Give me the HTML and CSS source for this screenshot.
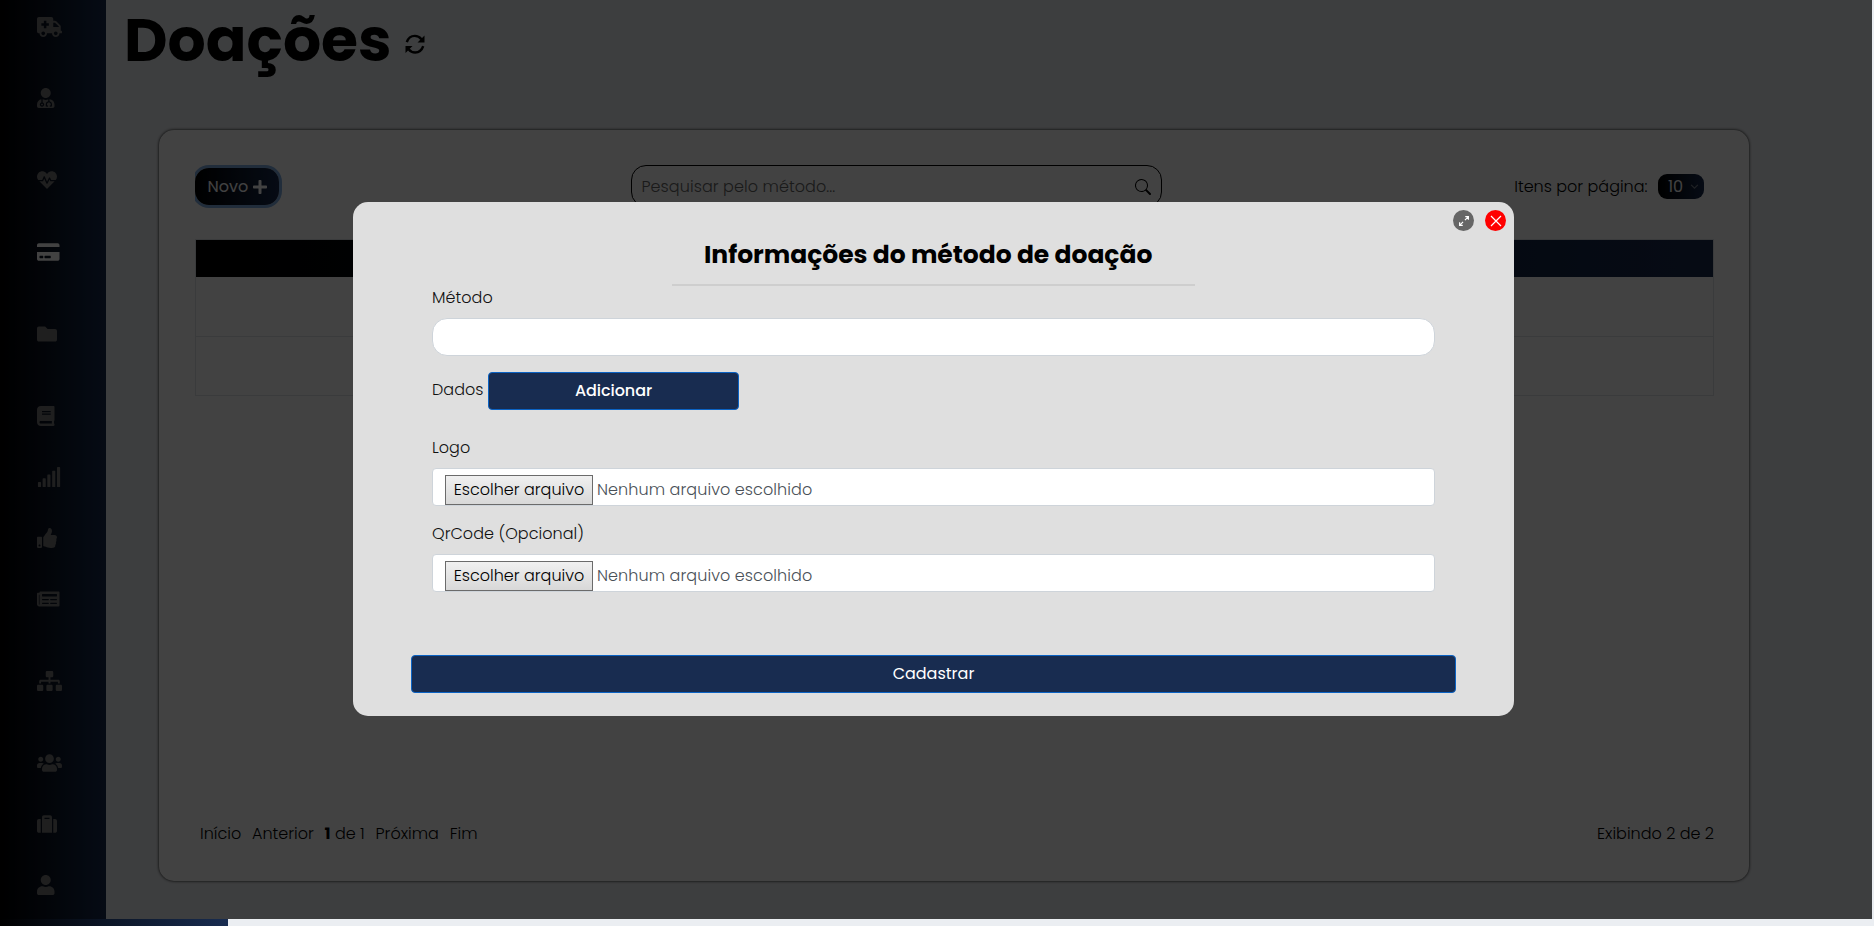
FILE: index.html
```html
<!DOCTYPE html>
<html lang="pt-BR">
<head>
<meta charset="utf-8">
<title>Doações</title>
<link rel="stylesheet" href="styles.css">
</head>
<body>
<div class="app">
  <nav class="sidebar">
    <svg class="ic" viewBox="0 0 640 512"><path fill-rule="evenodd" d="M624 352h-16V243.900c0-12.700-5.100-24.900-14.100-33.900L494 110.100c-9-9-21.200-14.100-33.900-14.100H416V48c0-26.500-21.500-48-48-48H48C21.500 0 0 21.500 0 48v320c0 26.500 21.500 48 48 48h16c0 53 43 96 96 96s96-43 96-96h128c0 53 43 96 96 96s96-43 96-96h48c8.800 0 16-7.200 16-16v-32c0-8.800-7.200-16-16-16zM160 464c-26.500 0-48-21.500-48-48s21.500-48 48-48 48 21.500 48 48-21.500 48-48 48zm144-248c0 4.400-3.600 8-8 8h-56v56c0 4.400-3.600 8-8 8h-48c-4.400 0-8-3.600-8-8v-56h-56c-4.400 0-8-3.600-8-8v-48c0-4.400 3.600-8 8-8h56v-56c0-4.400 3.600-8 8-8h48c4.400 0 8 3.600 8 8v56h56c4.400 0 8 3.600 8 8v48zm176 248c-26.500 0-48-21.500-48-48s21.500-48 48-48 48 21.500 48 48-21.500 48-48 48zm80-208H416V144h44.100l99.900 99.900V256z"/></svg>
    <svg class="ic mid doctor" viewBox="0 0 448 512"><path fill-rule="evenodd" d="M224 256c70.700 0 128-57.300 128-128S294.700 0 224 0 96 57.300 96 128s57.300 128 128 128zM104 424c0 13.300 10.700 24 24 24s24-10.700 24-24-10.700-24-24-24-24 10.700-24 24zm216-135.400v49c36.500 7.400 64 39.800 64 78.400v41.700c0 7.600-5.400 14.200-12.900 15.700l-32.200 6.400c-4.300.9-8.500-1.900-9.400-6.300l-3.100-15.700c-.9-4.300 1.900-8.600 6.300-9.400l19.300-3.900V416c0-62.800-96-65.100-96 1.900v26.700l19.300 3.900c4.300.9 7.100 5.100 6.300 9.400l-3.100 15.700c-.9 4.300-5.100 7.100-9.400 6.300l-31.200-4.200c-7.900-1.100-13.800-7.800-13.800-15.900V416c0-38.600 27.500-70.900 64-78.400v-45.200c-2.200.7-4.400 1.100-6.600 1.900-18 6.300-37.300 9.800-57.400 9.800s-39.400-3.500-57.400-9.800c-7.400-2.600-14.900-4.200-22.600-5.200v81.600c23.100 6.900 40 28.100 40 53.400 0 30.900-25.100 56-56 56s-56-25.100-56-56c0-25.300 16.900-46.500 40-53.400v-80.400C48.500 301 0 355.800 0 422.400v44.800C0 491.900 20.100 512 44.800 512h358.400c24.700 0 44.800-20.100 44.800-44.800v-44.800c0-72-56.800-130.300-128-133.800z"/></svg>
    <svg class="ic tall" viewBox="0 0 512 512"><path d="M320.200 243.800l-49.700 99.400c-6 12.100-23.400 11.700-28.900-.6l-56.900-126.300-30 71.700H60.600l182.500 186.500c7.100 7.300 18.600 7.300 25.700 0L451.400 288H342.300l-22.100-44.200zM473.700 73.900l-2.400-2.500c-51.500-52.600-135.800-52.600-187.400 0L256 100l-27.900-28.500c-51.500-52.700-135.900-52.700-187.400 0l-2.400 2.400C-10.400 123.700-12.500 203 31 256h102.400l35.900-86.200c5.400-12.900 23.600-13.200 29.400-.4l58.200 129.300 49-97.900c5.900-11.800 22.700-11.800 28.600 0l27.600 55.200H481c43.500-53 41.400-132.300-7.300-182.100z"/></svg>
    <svg class="ic mid on" viewBox="0 0 576 512"><path fill-rule="evenodd" d="M0 432c0 26.500 21.500 48 48 48h480c26.500 0 48-21.500 48-48V256H0v176zm192-68c0-6.600 5.400-12 12-12h136c6.600 0 12 5.400 12 12v40c0 6.600-5.400 12-12 12H204c-6.600 0-12-5.400-12-12v-40zm-128 0c0-6.600 5.400-12 12-12h72c6.600 0 12 5.400 12 12v40c0 6.600-5.400 12-12 12H76c-6.600 0-12-5.400-12-12v-40zM576 80v48H0V80c0-26.500 21.500-48 48-48h480c26.500 0 48 21.500 48 48z"/></svg>
    <svg class="ic tall" viewBox="0 0 512 512"><path d="M464 128H272l-64-64H48C21.500 64 0 85.500 0 112v288c0 26.500 21.500 48 48 48h416c26.500 0 48-21.500 48-48V176c0-26.500-21.500-48-48-48z"/></svg>
    <svg class="ic tall" viewBox="0 0 448 512"><path fill-rule="evenodd" d="M448 360V24c0-13.300-10.700-24-24-24H96C43 0 0 43 0 96v320c0 53 43 96 96 96h328c13.300 0 24-10.700 24-24v-16c0-7.500-3.500-14.300-8.900-18.700-4.200-15.400-4.200-59.300 0-74.700 5.400-4.300 8.900-11.100 8.900-18.600zM128 134c0-3.300 2.700-6 6-6h212c3.300 0 6 2.700 6 6v20c0 3.300-2.700 6-6 6H134c-3.300 0-6-2.700-6-6v-20zm0 64c0-3.300 2.700-6 6-6h212c3.300 0 6 2.700 6 6v20c0 3.300-2.700 6-6 6H134c-3.300 0-6-2.700-6-6v-20zm253.400 250H96c-17.700 0-32-14.300-32-32 0-17.600 14.400-32 32-32h285.400c-1.900 17.100-1.900 46.900 0 64z"/></svg>
    <svg class="ic" viewBox="0 0 640 512"><path d="M40 384h48q16 0 16 16v96q0 16-16 16H40q-16 0-16-16v-96q0-16 16-16zM160 288h48q16 0 16 16v192q0 16-16 16h-48q-16 0-16-16V304q0-16 16-16zM280 192h48q16 0 16 16v288q0 16-16 16h-48q-16 0-16-16V208q0-16 16-16zM404 96h48q16 0 16 16v384q0 16-16 16h-48q-16 0-16-16V112q0-16 16-16zM528 0h48q16 0 16 16v480q0 16-16 16h-48q-16 0-16-16V16q0-16 16-16z"/></svg>
    <svg class="ic" viewBox="0 0 512 512"><path fill-rule="evenodd" d="M104 224H24c-13.300 0-24 10.700-24 24v240c0 13.300 10.700 24 24 24h80c13.300 0 24-10.700 24-24V248c0-13.300-10.700-24-24-24zM64 472c-13.300 0-24-10.700-24-24s10.700-24 24-24 24 10.700 24 24-10.700 24-24 24zM384 81.500c0 42.400-26 66.200-33.300 94.500h101.700c33.400 0 59.400 27.700 59.600 58.100.1 17.900-7.500 37.200-19.400 49.200l-.1.100c9.800 23.300 8.200 56-9.300 79.500 8.700 25.900-.1 57.700-16.400 74.800 4.300 17.600 2.200 32.600-6.100 44.600C440.200 511.600 389.600 512 346.800 512h-2.800c-48.300 0-87.800-17.600-119.600-31.700-16-7.100-36.800-15.900-52.700-16.200-6.500-.1-11.800-5.500-11.800-12V238.300c0-3.200 1.300-6.300 3.600-8.500 39.600-39.100 56.600-80.600 89.100-113.100 14.800-14.800 20.200-37.200 25.400-58.900C282.500 39.300 291.800 0 312 0c24 0 72 8 72 81.500z"/></svg>
    <svg class="ic" viewBox="0 0 576 512"><path fill-rule="evenodd" d="M552 64H88c-13.300 0-24 10.700-24 24v8H24c-13.300 0-24 10.700-24 24v272c0 30.900 25.100 56 56 56h496c13.300 0 24-10.700 24-24V88c0-13.300-10.700-24-24-24zM56 400c-4.400 0-8-3.600-8-8V144h16v248c0 4.400-3.600 8-8 8zm236-16H140c-6.600 0-12-5.400-12-12v-8c0-6.600 5.400-12 12-12h152c6.600 0 12 5.400 12 12v8c0 6.600-5.400 12-12 12zm208 0H348c-6.600 0-12-5.400-12-12v-8c0-6.600 5.400-12 12-12h152c6.600 0 12 5.400 12 12v8c0 6.600-5.400 12-12 12zm-208-96H140c-6.600 0-12-5.400-12-12v-8c0-6.600 5.400-12 12-12h152c6.600 0 12 5.400 12 12v8c0 6.600-5.400 12-12 12zm208 0H348c-6.600 0-12-5.400-12-12v-8c0-6.600 5.400-12 12-12h152c6.600 0 12 5.400 12 12v8c0 6.600-5.400 12-12 12zm0-96H140c-6.600 0-12-5.400-12-12v-40c0-6.600 5.400-12 12-12h360c6.600 0 12 5.400 12 12v40c0 6.600-5.400 12-12 12z"/></svg>
    <svg class="ic tall" viewBox="0 0 640 512"><path d="M128 352H32c-17.700 0-32 14.300-32 32v96c0 17.700 14.300 32 32 32h96c17.700 0 32-14.300 32-32v-96c0-17.700-14.300-32-32-32zm-24-80h192v48h48v-48h192v48h48v-57.600c0-21.200-17.200-38.400-38.400-38.400H344v-64h40c17.700 0 32-14.300 32-32V32c0-17.700-14.300-32-32-32H256c-17.700 0-32 14.300-32 32v96c0 17.700 14.300 32 32 32h40v64H94.400C73.200 224 56 241.200 56 262.400V320h48v-48zm264 80h-96c-17.700 0-32 14.300-32 32v96c0 17.700 14.300 32 32 32h96c17.700 0 32-14.300 32-32v-96c0-17.700-14.300-32-32-32zm240 0h-96c-17.700 0-32 14.300-32 32v96c0 17.700 14.300 32 32 32h96c17.700 0 32-14.300 32-32v-96c0-17.700-14.300-32-32-32z"/></svg>
    <svg class="ic tall" viewBox="0 0 640 512"><path d="M96 224c35.300 0 64-28.700 64-64s-28.700-64-64-64-64 28.700-64 64 28.700 64 64 64zm448 0c35.300 0 64-28.700 64-64s-28.700-64-64-64-64 28.700-64 64 28.700 64 64 64zm32 32h-64c-17.600 0-33.500 7.100-45.100 18.600 40.300 22.100 68.900 62 75.100 109.400h66c17.700 0 32-14.300 32-32v-32c0-35.300-28.700-64-64-64zm-256 0c61.900 0 112-50.100 112-112S381.900 32 320 32 208 82.100 208 144s50.100 112 112 112zm76.800 32h-8.300c-20.800 10-43.900 16-68.500 16s-47.600-6-68.500-16h-8.300C179.600 288 128 339.600 128 403.200V432c0 26.500 21.500 48 48 48h288c26.500 0 48-21.500 48-48v-28.800c0-63.600-51.600-115.200-115.200-115.200zm-223.700-13.400C161.500 263.100 145.600 256 128 256H64c-35.300 0-64 28.700-64 64v32c0 17.700 14.300 32 32 32h65.900c6.300-47.400 34.900-87.300 75.200-109.400z"/></svg>
    <svg class="ic" viewBox="0 0 512 512"><path fill-rule="evenodd" d="M128 480h256V80c0-26.500-21.500-48-48-48H176c-26.500 0-48 21.500-48 48v400zm64-384h128v32H192V96zm320 80v256c0 26.500-21.500 48-48 48h-48V128h48c26.500 0 48 21.500 48 48zM96 480H48c-26.500 0-48-21.500-48-48V176c0-26.500 21.500-48 48-48h48v352z"/></svg>
    <svg class="ic" viewBox="0 0 448 512"><path d="M224 256c70.700 0 128-57.300 128-128S294.700 0 224 0 96 57.300 96 128s57.300 128 128 128zm89.600 32h-16.700c-22.200 10.200-46.900 16-72.900 16s-50.600-5.800-72.900-16h-16.700C60.200 288 0 348.200 0 422.400V464c0 26.500 21.500 48 48 48h352c26.500 0 48-21.500 48-48v-41.600c0-74.200-60.200-134.400-134.400-134.400z"/></svg>
  </nav>
  <main class="main">
    <header class="head">
      <h1 class="title">Doações</h1>
      <svg class="sync" viewBox="0 0 20 20"><path class="arc" d="M1.800 8.200C3.200 4 6.200 1.900 9.800 1.900c2.700 0 4.900 1.100 6.600 3.300M18.200 12.200c-1.400 4.200-4.400 6.300-8 6.300-2.700 0-4.900-1.100-6.600-3.300"/><path d="M19.500 1.500v7h-7zM.5 18.900v-7h7z"/></svg>
    </header>
    <section class="card">
      <div class="tools">
        <button class="novo"><span>Novo</span><svg class="plus" viewBox="0 0 448 512"><path d="M416 208H272V64c0-17.700-14.300-32-32-32h-32c-17.700 0-32 14.300-32 32v144H32c-17.700 0-32 14.300-32 32v32c0 17.700 14.300 32 32 32h144v144c0 17.700 14.300 32 32 32h32c17.700 0 32-14.300 32-32V304h144c17.700 0 32-14.300 32-32v-32c0-17.700-14.300-32-32-32z"/></svg></button>
        <div class="search"><span class="ph">Pesquisar pelo método...</span><svg class="lens" viewBox="0 0 16 16"><path d="M11.742 10.344a6.500 6.500 0 1 0-1.397 1.398h-.001c.03.040.062.078.098.115l3.850 3.850a1 1 0 0 0 1.415-1.414l-3.850-3.850a1.007 1.007 0 0 0-.115-.1zM12 6.500a5.500 5.500 0 1 1-11 0 5.500 5.500 0 0 1 11 0z"/></svg></div>
        <div class="per"><span>Itens por página:</span><span class="sel"><span>10</span><svg class="chev" viewBox="0 0 16 16"><path d="M2 5l6 6 6-6"/></svg></span></div>
      </div>
      <div class="table"><div class="th"></div><div class="tr"></div><div class="tr"></div></div>
      <footer class="foot">
        <div class="pages"><span>Início</span><span>Anterior</span><span><b>1</b> de 1</span><span>Próxima</span><span>Fim</span></div>
        <span class="count">Exibindo 2 de 2</span>
      </footer>
    </section>
  </main>
</div>
<div class="strip"><div class="strip-l"></div></div>
<div class="overlay">
  <div class="modal">
    <div class="acts">
      <span class="round"><svg viewBox="0 0 16 16"><path d="M9.500 6.500L15 1M10 1h5v5M6.500 9.500L1 15M1 10v5h5"/></svg></span>
      <span class="round red"><svg viewBox="0 0 16 16"><path d="M0 0l16 16M16 0L0 16"/></svg></span>
    </div>
    <h2 class="mtitle">Informações do método de doação</h2>
    <div class="rule"></div>
    <form class="form">
      <label class="lb l1">Método</label>
      <div class="inp rounded"></div>
      <div class="dados"><label class="lb l2">Dados</label><button type="button" class="btn add"><span>Adicionar</span></button></div>
      <label class="lb l3">Logo</label>
      <div class="inp file"><span class="choose"><span>Escolher arquivo</span></span><span class="none">Nenhum arquivo escolhido</span></div>
      <label class="lb l4">QrCode (Opcional)</label>
      <div class="inp file"><span class="choose"><span>Escolher arquivo</span></span><span class="none">Nenhum arquivo escolhido</span></div>
    </form>
    <button class="btn save"><span>Cadastrar</span></button>
  </div>
</div>
</body>
</html>
```
FILE: styles.css
```css
* { box-sizing: border-box; }
html, body { height: 100%; }
body {
  margin: 0;
  overflow: hidden;
  background: #ebeef2;
  color: #000;
  font: 300 16px/24px Poppins, Inter, "Open Sans", sans-serif;
}
button { font: inherit; padding: 0; }
.app { display: flex; height: 919px; }

.sidebar {
  width: 106px;
  padding: 17px 0 0 37px;
  display: flex;
  flex-direction: column;
  align-items: flex-start;
  gap: 41px;
  background: linear-gradient(90deg, #000 0%, #182c50 100%);
  fill: #777;
}
.ic { display: block; height: 20px; flex: none; }
.mid { margin-top: 11.3px; }
.doctor { margin-top: 9.7px; }
.tall { margin-top: 21px; }
.on { fill: #fff; }

.main { flex: 1; padding: 0 0 0 18px; }
.head { display: flex; align-items: center; height: 80px; }
.title { margin: 0; font-size: 60px; line-height: 80px; font-weight: 700; }
.sync { width: 20px; height: 20px; margin: 8px 0 0 13px; }
.arc { fill: none; stroke: #000; stroke-width: 2.4; }

.card {
  width: 1590px;
  height: 751px;
  margin: 50px 0 0 35px;
  padding: 35px 35px 0;
  display: flex;
  flex-direction: column;
  background: #fff;
  border-radius: 15px;
  box-shadow: 0 0 3px 0 #000;
}
.tools { display: flex; align-items: center; height: 42px; }
.novo {
  display: flex;
  align-items: center;
  gap: 5px;
  width: 84px;
  height: 37px;
  padding: 1px 0 0 12.5px;
  margin: 1px 0 0 1px;
  border: 0;
  border-radius: 14px;
  color: #fff;
  background: linear-gradient(90deg, #000, #182c50);
  box-shadow: 0 0 0 3px #80aee2;
  font-weight: 400;
  clip-path: inset(-4px -4px -4px 0);
}
.plus { width: 14px; fill: #fff; }
.search {
  display: flex;
  align-items: center;
  justify-content: space-between;
  width: 531px;
  height: 42px;
  margin-left: 352px;
  padding: 1px 10px 0 9.5px;
  border: 1px solid #000;
  border-radius: 15px;
}
.ph { color: #666; letter-spacing: .07px; }
.lens { width: 16px; height: 16px; }
.per { display: flex; align-items: center; gap: 10.5px; margin: 1px 10px 0 auto; }
.sel {
  display: flex;
  align-items: center;
  justify-content: space-between;
  width: 46px;
  height: 25px;
  padding: 0 5px 0 10px;
  border-radius: 9px;
  color: #fff;
  font-weight: 400;
  background: linear-gradient(90deg, #000, #182c50);
}
.chev { width: 9px; fill: none; stroke: #78828c; stroke-width: 2; }

.table { margin: 32px 0 0 1px; border: 1px solid #dee2e6; }
.th { height: 37px; background: linear-gradient(90deg, #000, #182c50); }
.tr { height: 59px; border-top: 1px solid #dee2e6; }
.tr:nth-child(2) { border-top: 0; }

.foot { display: flex; justify-content: space-between; margin-top: 426px; padding: 0 0 0 6px; }
.pages { display: flex; gap: 10.8px; }
b { font-weight: 700; }

.strip { height: 7px; }
.strip-l { width: 228px; height: 7px; background: linear-gradient(90deg, #000, #182c50); }

.overlay {
  position: absolute;
  top: 0;
  left: 0;
  width: 1872px;
  height: 919px;
  background: rgba(0, 0, 0, .74);
}
.modal {
  width: 1161px;
  height: 514px;
  margin: 202px 0 0 353px;
  display: flex;
  flex-direction: column;
  background: #dfdfdf;
  border-radius: 15px;
}
.acts { display: flex; justify-content: flex-end; gap: 11px; padding: 8px 8px 0 0; }
.round {
  display: flex;
  align-items: center;
  justify-content: center;
  width: 21px;
  height: 21px;
  border-radius: 50%;
  background: #666;
}
.red { background: #f00; }
.round svg { width: 10px; height: 10px; overflow: visible; fill: none; stroke: #fff; stroke-width: 1.9; }
.mtitle { margin: 6px 0 0 351px; font-size: 25px; line-height: 36px; font-weight: 700; letter-spacing: -.02px; white-space: nowrap; }
.rule { width: 523px; height: 2px; margin: 11px 0 0 319px; background: #cecece; }
.form { display: flex; flex-direction: column; margin: 0 79px; }
.lb { display: block; color: #111; letter-spacing: .04px; }
.l1 { margin: 0 0 8px; }
.inp { height: 38px; border: 1px solid #ced4da; border-radius: 4px; background: #fff; }
.rounded { border-radius: 15px; }
.dados { display: flex; align-items: center; margin-top: 16px; }
.l2 { width: 56px; margin-bottom: 2px; }
.btn {
  height: 38px;
  border: 1px solid #0b63c4;
  border-radius: 4px;
  color: #fff;
  background: #182c50;
  font-weight: 400;
}
.add { width: 251px; font-weight: 500; letter-spacing: -.05px; }
.l3 { margin: 25.5px 0 8px; }
.l4 { margin: 16px 0 8px; }
.file { display: flex; padding: 6px 12px 0; overflow: hidden; }
.choose {
  display: flex;
  align-items: center;
  justify-content: center;
  width: 148px;
  height: 30px;
  border: 1px solid #6b6b6b;
  color: #000;
  background: linear-gradient(#f0f0f0, #d8d8d8);
}
.none { margin: 3px 0 0 4px; color: #495057; letter-spacing: .08px; }
.save { width: 1045px; margin: 63.500px 0 0 58px; }
```
